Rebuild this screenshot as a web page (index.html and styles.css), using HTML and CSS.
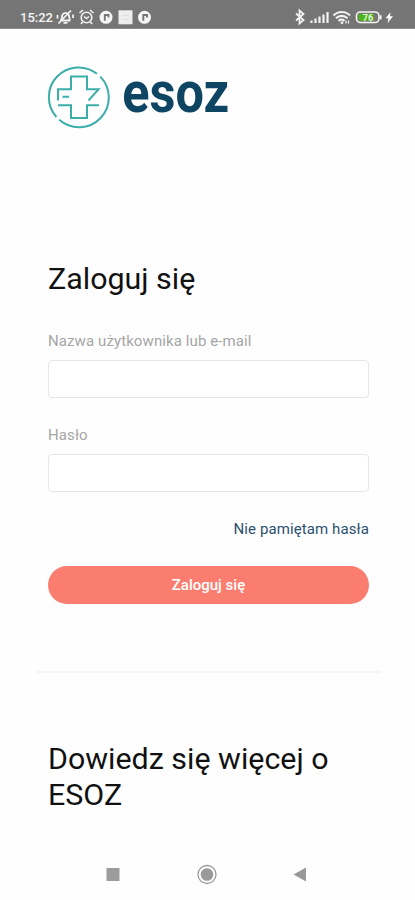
FILE: index.html
```html
<!DOCTYPE html>
<html lang="pl">
<head>
    <meta charset="UTF-8">
    <meta name="viewport" content="width=device-width, initial-scale=1.0">
    <title>ESOZ - Zaloguj się</title>
    <link rel="stylesheet" href="styles.css">
</head>
<body>

<!-- Status bar -->
<div class="status-bar">
    <span class="time">15:22</span>
    <svg class="status-left" width="98" height="18" viewBox="0 0 98 18">
        <!-- Muted bell -->
        <g fill="none" stroke="#f2f2f2" stroke-width="1.8">
            <path d="M4 12.5h10.5M5.500 12l.8-5a3.500 3.500 0 0 1 6.500 0l1 5M7.500 14.800h4M2.500 15.500L15 2.500M1.500 7v3.500M17 6.500V10"/>
        </g>
        <!-- Alarm clock -->
        <g fill="none" stroke="#f2f2f2" stroke-width="1.600">
            <circle cx="30.500" cy="9.500" r="5.300"/>
            <path d="M23.500 5l3.500-3M37.500 5L34 2M28 8.500l2.500 2 2.500-2M26.500 14L25 16M34.500 14l1.500 2"/>
        </g>
        <circle cx="50" cy="9.300" r="6.500" fill="#f5f5f5"/>
        <path d="M48.800 12.800V7h3.700v2.500" fill="none" stroke="#757575" stroke-width="1.900"/>
        <rect x="62.500" y="2.300" width="14" height="14" fill="#ededed"/>
        <path d="M66 7.500h7M66 11.500h7" stroke="#dedede"/>
        <circle cx="88.500" cy="9.300" r="6.500" fill="#f5f5f5"/>
        <path d="M87.300 12.800V7H91v2.500" fill="none" stroke="#757575" stroke-width="1.900"/>
    </svg>
    <svg class="status-right" width="102" height="18" viewBox="0 0 102 18">
        <!-- Bluetooth -->
        <path d="M2 5.500l7.500 6.500-4 3.500v-13l4 3.500L2 12.500" fill="none" stroke="#f2f2f2" stroke-width="1.800"/>
        <!-- Signal -->
        <path d="M17.500 12.500v2.500M21.500 10.500V15M25.500 8.500V15M29.500 6.500V15M33.500 4v11" stroke="#f2f2f2" stroke-width="2.200"/>
        <!-- Wifi -->
        <g fill="none" stroke="#f2f2f2" stroke-width="2.100">
            <path d="M39.500 7.500a11.500 11.500 0 0 1 16.500 0M42 10.300a8 8 0 0 1 11.500 0M44.500 12.800a5 5 0 0 1 6 0"/>
        </g>
        <circle cx="48" cy="14.800" r="1.400" fill="#f2f2f2"/>
        <path d="M52 12.500v3M54.500 15.500v-3" stroke="#f2f2f2" stroke-width="1.200"/>
        <!-- Battery -->
        <rect x="62.500" y="4" width="22.500" height="10.500" rx="4" fill="#757575" stroke="#f5f5f5" stroke-width="1.600"/>
        <path d="M66.500 5.800H79.500v7H66.500a2 2 0 0 1-2-2v-3a2 2 0 0 1 2-2z" fill="#4cb51c"/>
        <path d="M86.700 7.300v4" stroke="#f5f5f5" stroke-width="1.800"/>
        <text x="74" y="12.500" class="battery-text">76</text>
        <path d="M96.500 4.300L91.500 10.300h3l-1 5 5.500-7h-3z" fill="#fff"/>
    </svg>
</div>

<div class="container">
    <header>
        <svg width="240" height="90" viewBox="0 -13 240 90">
            <g fill="none" stroke="#3caeaa" stroke-width="2">
                <path d="M50 8.700A29.800 29.800 0 0 0 9.400 52M12.300 54.800A29.800 29.800 0 0 0 53.300 11.600"/>
                <path d="M11 35.500V24.300H24V11.500h16v12.800H51.500L41.500 35.500"/>
                <path d="M15.500 31.800h6.500M11 40.200H24V53h16V40.200H52"/>
            </g>
            <text x="75.200" y="47.200" class="logo-text" textLength="107" lengthAdjust="spacingAndGlyphs">esoz</text>
        </svg>
    </header>

    <form class="login">
        <h1>Zaloguj się</h1>
        <label for="username">Nazwa użytkownika lub e-mail</label>
        <input type="text" id="username">
        <label for="password">Hasło</label>
        <input type="password" id="password">
        <a class="forgot">Nie pamiętam hasła</a>
        <button type="button">Zaloguj się</button>
    </form>

    <hr>

    <h2>Dowiedz się więcej o ESOZ</h2>
</div>

<!-- Android navigation -->
<nav>
    <svg width="22" height="22" viewBox="0 0 22 22">
        <rect x="4.500" y="4" width="13" height="13" fill="#9c9c9c"/>
    </svg>
    <svg width="22" height="22" viewBox="0 0 22 22">
        <circle cx="11" cy="10.500" r="9" fill="none" stroke="#999" stroke-width="1.300"/>
        <circle cx="11" cy="10.500" r="6.300" fill="#999"/>
    </svg>
    <svg width="22" height="22" viewBox="0 0 22 22">
        <path d="M16 3.500v14L3.500 10.500z" fill="#999"/>
    </svg>
</nav>

</body>
</html>
```
FILE: styles.css
```css
* {
    box-sizing: border-box;
}
body {
    display: flex;
    flex-direction: column;
    height: 900px;
    margin: 0;
    background-color: #fefefe;
    color: #111;
    font-family: Roboto, "Liberation Sans", sans-serif;
}
.status-bar {
    display: flex;
    align-items: center;
    height: 29px;
    padding: 6px 19px 0 20px;
    background-color: #757575;
    border-bottom: 1px solid #8c8c8c;
    color: #f5f5f5;
}
.time {
    width: 36px;
    padding-top: 1px;
    font-size: 13px;
    font-weight: 500;
}
.status-right {
    margin-left: auto;
}
.battery-text {
    font-size: 9px;
    font-weight: bold;
    fill: #e4f5dc;
    text-anchor: middle;
}
.container {
    flex: 1;
    padding: 23px 46px 0 48px;
}
header {
    height: 90px;
    margin-left: -1px;
}
header svg {
    overflow: visible;
}
.logo-text {
    font-size: 57px;
    font-weight: 700;
    fill: #0d4562;
}
.login {
    display: flex;
    flex-direction: column;
    margin-top: 119px;
}
h1, h2 {
    margin: 0;
    font-size: 30.4px;
    font-weight: 400;
    line-height: 36.5px;
}
label {
    height: 20px;
    margin-top: 33px;
    font-size: 15px;
    line-height: 20px;
    letter-spacing: 0.1px;
    color: #a6a6a6;
}
input {
    height: 38px;
    margin-top: 9px;
    border: 1px solid #e6e6e6;
    border-radius: 4px;
    background-color: #fff;
}
input + label {
    margin-top: 27px;
}
.forgot {
    align-self: flex-end;
    margin-top: 27px;
    font-size: 15px;
    line-height: 20px;
    letter-spacing: 0.1px;
    color: #2b5170;
}
button {
    height: 38px;
    margin: 27px 0 0;
    padding: 0;
    border: none;
    border-radius: 19px;
    background-color: #fa7d70;
    color: #fff;
    font-family: inherit;
    font-size: 15px;
    font-weight: 500;
}
hr {
    height: 2px;
    margin: 67px -12px 0;
    border: none;
    background-color: #f5f5f5;
}
h2 {
    margin-top: 68px;
}
nav {
    display: flex;
    gap: 72px;
    height: 50px;
    padding: 14px 0 0 102px;
}
```
